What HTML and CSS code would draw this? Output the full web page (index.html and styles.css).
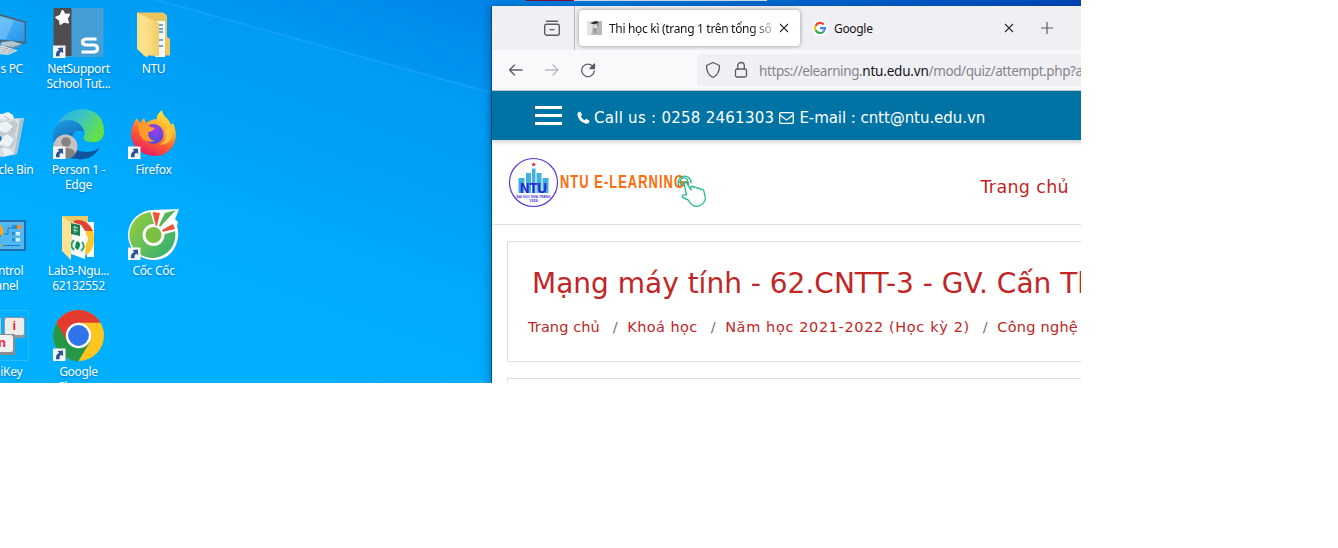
FILE: index.html
```html
<!DOCTYPE html>
<html lang="vi">
<head>
<meta charset="utf-8">
<title>Desktop</title>
<link rel="stylesheet" href="styles.css">
</head>
<body>
<svg class="defs" width="0" height="0" aria-hidden="true">
  <defs>
    <linearGradient id="folder" x1="0" x2="1"><stop offset="0" stop-color="#fbe08a"/><stop offset="1" stop-color="#f1cd62"/></linearGradient>
    <linearGradient id="edgeTop" x1="0" x2="1" y2=".4"><stop offset="0" stop-color="#2fa8e0"/><stop offset=".5" stop-color="#35c1d0"/><stop offset="1" stop-color="#62e04e"/></linearGradient>
    <linearGradient id="edgeLeft" x1="0" x2=".5" y2="1"><stop offset="0" stop-color="#1b9de2"/><stop offset="1" stop-color="#1254a0"/></linearGradient>
    <linearGradient id="fox" x1=".8" x2=".3" y2="1"><stop offset="0" stop-color="#fff04a"/><stop offset=".35" stop-color="#ffb02c"/><stop offset=".65" stop-color="#ff5a35"/><stop offset="1" stop-color="#e6176a"/></linearGradient>
    <radialGradient id="globe" cx=".6" cy=".3"><stop offset="0" stop-color="#a53bec"/><stop offset="1" stop-color="#5a4be0"/></radialGradient>
    <linearGradient id="coc" x1="0" x2="1" y2=".8"><stop offset="0" stop-color="#9bce3b"/><stop offset="1" stop-color="#35b070"/></linearGradient>
    <linearGradient id="screen" x1="0" x2="1" y2="1"><stop offset="0" stop-color="#7accff"/><stop offset="1" stop-color="#2396ec"/></linearGradient>
    <g id="shortcut">
      <rect x="0" y="38.500" width="12.500" height="12.500" fill="#f4f6f8"/>
      <path d="M3 49.300q-.6-5 3.200-6.200L4.500 41l5.400-.4.300 5.600-1.700-1.500q-2.800 1-1.700 4.600z" fill="#2c5598"/>
    </g>
  </defs>
</svg>

<main class="desktop">
  <svg class="wallpaper" viewBox="0 0 1081 383" aria-hidden="true">
    <path d="M155 0L492 93V0z" class="ray-shade"/>
    <path d="M145 -3L200 12L492 93" class="ray"/>
  </svg>

  <section class="icons">
    <div class="item">
      <svg viewBox="0 0 51 52"><path d="M-10 -2l58 16.500v22.500l-58-4z" fill="#4a6478"/><path d="M-10 0l56.500 15.800V34.500l-56.500-4z" fill="url(#screen)"/><path d="M22 9l14 4-8 19.500-6-.5z" fill="#a6ddff" opacity=".35"/><path d="M24 35l10-1 10 3-9 3-13-1z" fill="#b4c6d0"/><path d="M22 38l13 2 7-2v1.500L35 42l-13-2z" fill="#6d8da1"/><path d="M6 40l18-1.500 16 5-10 4.500-24-3z" fill="#dce4e8"/><path d="M20 42l16 3.500M22 40l15 4M18 44l14 3M24 46l6-5M29 47l6-5" stroke="#93a6b1" stroke-width=".7"/></svg>
      <span>This PC</span>
    </div>
    <div class="item">
      <svg viewBox="0 0 51 52"><rect x=".5" y="1" width="50" height="49" fill="#459fd5"/><rect x=".5" y="1" width="18" height="48" fill="#4f4d50"/><path d="M9.500 4l2.200 3.800 4.300-.3-2.300 4 1.300 4-4-1L7.500 17l-.7-4.200L3.300 10.500l4.200-1.700z" fill="#fff" stroke="#fff" stroke-width="2" stroke-linejoin="round"/><path d="M43.500 32H34q-4.500 0-4.500 3t4.500 3h6.500q4 0 4 3.500t-4 3.500H28.500" fill="none" stroke="#fff" stroke-width="3.200"/><use href="#shortcut"/></svg>
      <span>NetSupport<br>School Tut...</span>
    </div>
    <div class="item">
      <svg viewBox="0 0 51 52"><path d="M9 5.500h26l4 3v22l3 5v13H15z" fill="#e9c55e"/><path d="M29 14h8v36H27z" fill="#f5f7fa"/><path d="M31 18h4m-5 4h5m-5 3h5m-5 8h5m-5 6h5" stroke="#3f8fc6" stroke-width="1.500"/><path d="M9 5.500l11 5v39l-2 .5-9-8z" fill="#fbe08a"/><path d="M18 10l13 6v33l-12-1z" fill="url(#folder)"/><path d="M38 29l4 3v16h-4z" fill="#efc65a"/></svg>
      <span>NTU</span>
    </div>

    <div class="item">
      <svg viewBox="0 0 51 52"><path d="M8 11l7-6 9 1 6-2 5 3 1 4 6 2-2 5H10z" fill="#eef2f4"/><path d="M5 12l41-2-7 36-14 3-14-2z" fill="#d9e0e4"/><path d="M42 11l4-1-7 36-3 1z" fill="#a9c0cd"/><path d="M22 12l6 3 8-3 4 4-3 9 1 8-4 8-8-2-8 4z" fill="#c3ccd2"/><path d="M22 15l7-2 6 6-7 6-6-2zM22 31l7-5 7 5-5 8-9-2zM24 40l7 1 4 4-8 3z" fill="#eff2f4"/><path d="M26 8l5 3-4 3M33 20l4 4" fill="none" stroke="#a5b1b9" stroke-width=".8"/><path d="M14 27q9-2 10 4l-3 4-7-1z" fill="#1472ce"/></svg>
      <span>Recycle Bin</span>
    </div>
    <div class="item">
      <svg viewBox="0 0 51 52"><path d="M4 20C6-2 51-9 51 23q0 12-13 11-10-1-7-6c5-13-19-16-31-2z" fill="url(#edgeTop)"/><path d="M0 27C1 7 28 8 31 24q-8-4-11 3-6 17 14 17 9 0 13-5-8 14-22 12Q0 50 0 27z" fill="url(#edgeLeft)"/><path d="M18 24q-5 20 16 20 9 0 13-5-8 14-22 12-16-13-7-27z" fill="#10559c"/><circle cx="12.500" cy="38.500" r="12" fill="#c4c3c2"/><circle cx="13" cy="34" r="4.800" fill="#858381"/><path d="M6 45q1-5 7-5 8 0 9 5-2 5-9 6z" fill="#858381"/><use href="#shortcut"/></svg>
      <span>Person 1 -<br>Edge</span>
    </div>
    <div class="item">
      <svg viewBox="0 0 51 52"><path d="M9 10l3 5 4-5 2 5q6-4 11-4c-1-4 3-7 5-9 0 6 7 8 9 15l2-2c8 17-2 33-18 33S0 34 4 20q1-5 5-10z" fill="url(#fox)"/><circle cx="25.500" cy="26" r="10" fill="url(#globe)"/><path d="M10 16q8-2 13 3l4 1q-3 4-7 4 0 8 7 9-11 3-15-6z" fill="#ff9a2b"/><path d="M29 13q9 2 9 13 0 8-7 11 15-1 13-15l-5-8q2 5 0 7-4-7-10-8z" fill="#ffc23b"/><use href="#shortcut"/></svg>
      <span>Firefox</span>
    </div>

    <div class="item">
      <svg viewBox="0 0 51 52"><rect x="-5" y="11" width="53" height="31" rx="1.500" fill="#236fae"/><rect x="-5" y="13" width="51" height="27" fill="#50b9f3"/><circle cx="17" cy="22" r="8" fill="#1b7dca"/><path d="M17 14a8 8 0 0 1 6.500 13L17 22z" fill="#fba826"/><path d="M26 25h4v-6h4" fill="none" stroke="#1c77b9"/><path d="M34 16h9v4h-9zM34 23h8v3.500h-8zM34 29h8v3.500h-8z" fill="#2c8dcb"/><path d="M39 16h4v4h-4z" fill="#ff8a20"/><path d="M37.500 23H42v3.500h-4.500zM37.500 29H42v3.500h-4.500z" fill="#d7f1ff"/><path d="M5 36.500h37" stroke="#147cc3"/><path d="M5 36.500h20" stroke="#f19b28"/></svg>
      <span>Control<br>Panel</span>
    </div>
    <div class="item">
      <svg viewBox="0 0 51 52"><path d="M9 7h26v30H9z" fill="#e9c961"/><path d="M34 13h7v35h-7z" fill="#f8f8f7"/><path d="M24 13q17-1 17 17 0 15-13 18z" fill="#fcc72e"/><path d="M20 12q13-4 20 10H27z" fill="#df4436"/><circle cx="29" cy="30" r="6" fill="#fff"/><circle cx="28" cy="30" r="4.500" fill="#3679dd"/><path d="M19 13l9 3 5 7-1 27-14-5z" fill="#f7fafa"/><path d="M18 14l9 2v11l-9-2z" fill="#198151"/><path d="M20 18l5 1m-5 2l5 1m-3-5v7" stroke="#c9ead7" stroke-width=".8"/><path d="M21 31q-5 5 0 10m8-8q4 5-1 9" fill="none" stroke="#23a05f" stroke-width="1.800"/><path d="M23 33q4-2 4 4l-2 4-3-2z" fill="#0c8b4d"/><path d="M9 7l9 7v37l-9-9z" fill="#fbe294"/></svg>
      <span>Lab3-Ngu...<br>62132552</span>
    </div>
    <div class="item">
      <svg viewBox="0 0 51 52"><path d="M25 1l26-1q-2 6-4 10l3 3-1 5c3 5 2 33-24 33A25 25 0 0 1 25 1z" fill="#fff"/><path d="M24 3a23 23 0 1 0 23 19L31 27 27 16z" fill="url(#coc)"/><circle cx="25.500" cy="26" r="11" fill="#fff"/><circle cx="25.500" cy="26" r="8" fill="#7ac143"/><path d="M25 3l7 1-3 13-3-1z" fill="#ef5438"/><path d="M37 4l11-3-16 17-1-2z" fill="#52b55b"/><path d="M45 15l2 5-12 3-1-2z" fill="#ef5438"/><path d="M23 2l4 14M33 4l-3 14M48 2L34 20M48 21l-14 3" stroke="#fff" stroke-width="1.400"/><use href="#shortcut"/></svg>
      <span>Cốc Cốc</span>
    </div>

    <div class="item">
      <svg viewBox="0 0 51 52" class="keys"><path d="M-5 .5h55.500v50H-5" fill="none" stroke="#36c0fb" stroke-width=".7"/><rect x="2" y="8" width="21" height="19" rx="1" fill="#bfc3c5"/><rect x="26" y="7" width="21" height="21" rx="1" fill="#929698"/><rect x="27" y="8" width="19" height="17" rx="2" fill="#ececec"/><rect x="15" y="24" width="22" height="21" rx="1" fill="#898d8f"/><rect x="15" y="25" width="20" height="17" rx="2" fill="#f1f1f1"/><text x="34.500" y="19.500">i</text><text x="20" y="36.500">n</text></svg>
      <span>UniKey</span>
    </div>
    <div class="item">
      <svg viewBox="0 0 51 52"><circle cx="25.500" cy="25.500" r="25.500" fill="#fdc51d"/><path d="M3.400 12.800A25.500 25.500 0 0 1 47.600 12.800H25.500L14 32z" fill="#e33b2e"/><path d="M3.400 12.800A25.500 25.500 0 0 0 25.500 51L37 32 25 36 14.500 32z" fill="#259746"/><circle cx="25.500" cy="25.500" r="12.700" fill="#fff"/><circle cx="25.500" cy="25.500" r="10.400" fill="#2f74e8"/><use href="#shortcut"/></svg>
      <span>Google<br>Chrome</span>
    </div>
  </section>

  <div class="behind"><i class="behind-red"></i><i class="behind-gray"></i></div>

  <section class="window">
    <header class="tabs">
      <div class="recent"><svg width="18" height="18" viewBox="0 0 18 18" fill="none" stroke="#5b5b66" stroke-width="1.400" stroke-linecap="round"><path d="M3.500 2.200h11M7 10.600h4"/><rect x="1.700" y="5.200" width="14.600" height="11" rx="2"/></svg></div>
      <div class="tab active">
        <svg width="16" height="16" viewBox="0 0 16 16"><path d="M0 1h15v14H0z" fill="#b8b8b8"/><path d="M0 1h7L4 15H0z" fill="#e4e4e4"/><path d="M3 3l6-2 3 1.500L7 4.500z" fill="#2e2e2e"/><path d="M5 4.500h5V8L8 10 5 7z" fill="#d9d9d9"/><path d="M11 3v3M6.500 8l1.500 2 1.500-2M8 10v3" fill="none" stroke="#666" stroke-width=".8"/></svg>
        <span class="title fade">Thi học kì (trang 1 trên tổng số 3)</span>
        <svg class="x" width="10" height="10" viewBox="0 0 10 10"><path d="M1 1l8 8M9 1l-8 8"/></svg>
      </div>
      <div class="tab">
        <svg width="16" height="16" viewBox="0 0 16 16"><circle cx="8" cy="8" r="8" fill="#fff"/><g fill="none" stroke-width="2.200"><path d="M11.800 4.500A5 5 0 0 0 3.600 5.700" stroke="#ea4335"/><path d="M3.600 5.700a5 5 0 0 0 0 4.600" stroke="#fbbc05"/><path d="M3.600 10.300a5 5 0 0 0 7.800 1.400" stroke="#34a853"/><path d="M11.400 11.700A5 5 0 0 0 13 8.100H8" stroke="#4285f4"/></g></svg>
        <span class="title">Google</span>
        <svg class="x" width="10" height="10" viewBox="0 0 10 10"><path d="M1 1l8 8M9 1l-8 8"/></svg>
      </div>
      <svg class="plus" width="12" height="12" viewBox="0 0 12 12"><path d="M6 0v12M0 6h12"/></svg>
    </header>

    <nav class="toolbar">
      <svg width="16" height="16" viewBox="0 0 16 16" class="tool"><path d="M14 8H1.500M6.500 3L1.500 8l5 5"/></svg>
      <svg width="16" height="16" viewBox="0 0 16 16" class="tool off"><path d="M1.500 8H14M9 3l5 5-5 5"/></svg>
      <svg width="16" height="16" viewBox="0 0 16 16" class="tool"><path d="M13 4.500A6.300 6.300 0 1 0 14.300 9"/><path d="M14.500 2v4.500H10z" fill="#5b5b66"/></svg>
      <div class="address">
        <svg width="16" height="18" viewBox="0 0 16 18" class="tool"><path d="M8 1.500l6.500 3q0 9-6.500 12Q1.500 13.500 1.500 4.500z"/></svg>
        <svg width="14" height="18" viewBox="0 0 14 18" class="tool"><rect x="1.500" y="8" width="11" height="8" rx="1.500"/><path d="M3.700 8V4.800a3.300 3.300 0 0 1 6.600 0V8"/></svg>
        <span class="url">https://elearning.<b>ntu.edu.vn</b>/mod/quiz/attempt.php?attempt</span>
      </div>
    </nav>

    <div class="contact">
      <div class="burger"><i></i><i></i><i></i></div>
      <svg width="13" height="13" viewBox="0 0 13 13"><path d="M1 1.500L3.300.4 5.200 4 3.700 5.300Q5 8 7.700 9.300L9 7.800l3.600 1.900-1 2.300Q10.500 13 8.500 12.500 2 10.500.5 4.500.2 2.500 1 1.500z" fill="#fff"/></svg>
      <span class="call">Call us : 0258 2461303</span>
      <svg width="15" height="12" viewBox="0 0 15 12" fill="none" stroke="#fff" stroke-width="1.300"><rect x=".7" y=".7" width="13.600" height="10.600" rx="1"/><path d="M1 3l6.500 5L14 3"/></svg>
      <span class="mail">E-mail : cntt@ntu.edu.vn</span>
    </div>

    <div class="brand">
      <svg class="logo" width="200" height="52" viewBox="0 0 200 52">
        <circle cx="25.500" cy="25.500" r="24" fill="#fff" stroke="#5735e0" stroke-width="1.200"/>
        <path d="M10.500 21h6v15h-6zM18 16h5v20h-5zM24 11.500h3.500V36H24zM28.500 16h5v20h-5zM34.500 21h6v15h-6z" fill="#3fb0df"/>
        <path d="M25.700 5.200l.7 1.600h1.700l-1.300 1.100.5 1.700-1.600-1-1.500 1 .5-1.700-1.400-1.100H25z" fill="#e02020"/>
        <text x="25.500" y="35.500" class="ntu" textLength="27" lengthAdjust="spacingAndGlyphs">NTU</text>
        <text x="25.500" y="40.800" class="school" textLength="34" lengthAdjust="spacingAndGlyphs">ĐẠI HỌC NHA TRANG</text>
        <text x="25.500" y="44.800" class="school">1959</text>
        <text x="52" y="30.700" class="word" textLength="125" lengthAdjust="spacingAndGlyphs">NTU E-LEARNING</text>
        <circle cx="178" cy="27" r="3.200" fill="#7d7a3a" opacity=".8"/>
        <g fill="none" stroke="#16b888" stroke-width="1.200" stroke-linejoin="round" stroke-linecap="round">
          <path d="M171 29a6.500 6.500 0 1 1 12-3M173.500 28a4 4 0 1 1 6.500-3"/>
          <path d="M176 26.500q1.800-2 3 0l4 6.500-.2-3q1.800-2.200 3.400.8.700-2 3.400.8 1.300-1.700 3 1 3-1.400 3.400 2l1.300 5.500q.4 6.500-7 9-6.500 1.500-10-6l-6-3q-.8-3 4.200-2.100z" fill="#fff"/>
        </g>
      </svg>
      <a class="home">Trang chủ</a>
    </div>

    <article class="page">
      <div class="card">
        <h1>Mạng máy tính - 62.CNTT-3 - GV. Cấn Thị Phượng</h1>
        <div class="crumbs"><a>Trang chủ</a><i>/</i><a class="faculty">Khoá học</a><i>/</i><a class="term">Năm học 2021-2022 (Học kỳ 2)</a><i>/</i><a class="dept">Công nghệ</a></div>
      </div>
      <div class="card"></div>
    </article>
  </section>
</main>
</body>
</html>
```

FILE: styles.css
```css
* { box-sizing: border-box; }
body { margin: 0; background: #fff; overflow: hidden; }
svg { display: block; flex: none; }
.defs { position: absolute; }

.desktop {
  position: relative;
  width: 1081px;
  height: 383px;
  overflow: hidden;
  background: linear-gradient(to bottom left, #0048bc 0%, #0062d0 10%, #0087ea 27%, #009bf4 41%, #00a1f7 53%, #00aafc 67%, #00afff 85%, #00b0ff 100%);
  font-family: "Noto Sans", "Open Sans", sans-serif;
}
.wallpaper { position: absolute; inset: 0; }
.ray { stroke: #1eaaff; stroke-width: 2; opacity: .55; fill: none; }
.ray-shade { fill: #0078dd; opacity: .1; }

.icons {
  position: relative;
  display: grid;
  grid-template-columns: repeat(3, 75px);
  grid-auto-rows: 101px;
  width: 225px;
  margin-left: -34px;
  padding-top: 7px;
}
.item { display: flex; flex-direction: column; align-items: center; gap: 2px; }
.item svg { width: 51px; height: 52px; overflow: visible; }
.item span {
  color: #fff;
  font-size: 12px;
  line-height: 15px;
  letter-spacing: -.3px;
  text-align: center;
  white-space: nowrap;
  text-shadow: 0 1px 2px rgba(0, 50, 110, .45);
}
.keys text { font: bold 13px "Liberation Sans", sans-serif; fill: #f3262c; }

.behind { position: absolute; left: 526px; top: 0; display: flex; height: 1px; }
.behind-red { width: 48px; background: #7c1235; }
.behind-gray { width: 193px; background: #d8e2e6; }

.window {
  position: absolute;
  left: 491px;
  top: 6px;
  width: 700px;
  height: 400px;
  border-left: 1px solid #0b4d78;
  background: #fff;
  box-shadow: 0 0 10px rgba(0, 30, 70, .4);
}

.tabs { display: flex; align-items: center; height: 44px; background: #f0eff4; }
.recent { width: 83px; height: 44px; padding: 13px 0 0 51px; border-right: 1px solid #b9b9be; }
.tab { display: flex; align-items: center; width: 221px; height: 36px; padding: 0 11px 0 8px; }
.tab + .tab { margin-left: 4px; }
.active { margin-left: 4px; background: #fff; border-radius: 4px; box-shadow: 0 0 4px rgba(0, 0, 0, .4); }
.title { flex: 1; margin: 2px 0 0 6px; overflow: hidden; color: #15141a; font-size: 12px; line-height: 18px; letter-spacing: -.32px; white-space: nowrap; }
.fade { -webkit-mask-image: linear-gradient(to right, #000 86%, transparent 104%); mask-image: linear-gradient(to right, #000 86%, transparent 104%); margin-right: 5px; }
.x path { stroke: #2b2a33; stroke-width: 1.1; }
.plus { margin-left: 16px; }
.plus path { stroke: #5b5b66; stroke-width: 1.2; }

.toolbar { display: flex; align-items: center; gap: 20px; height: 41px; padding-left: 16px; background: #f9f9fb; border-bottom: 1px solid #ccc; }
.tool { fill: none; stroke: #5b5b66; stroke-width: 1.3; stroke-linecap: round; stroke-linejoin: round; }
.off { opacity: .4; }
.address { display: flex; align-items: center; flex: 1; height: 32px; margin-left: 81px; padding-left: 8px; gap: 13px; border-radius: 4px; background: #f0f0f4; overflow: hidden; }
.url { margin: 1px 0 0 -2px; color: #85848c; font-size: 13.5px; letter-spacing: -.4px; white-space: nowrap; }
.url b { color: #15141a; font-weight: 400; letter-spacing: -.2px; }

.contact { position: relative; display: flex; align-items: center; height: 49px; padding: 4px 0 0 43px; background: #0073a5; color: #fff; font: 15px "DejaVu Sans", sans-serif; box-shadow: 0 2px 5px rgba(0, 0, 0, .2); white-space: nowrap; }
.burger { display: grid; gap: 5px; width: 27px; margin: -5px 15px 0 0; }
.burger i { height: 3px; background: #fff; }
.call { margin: 0 5px 0 4px; letter-spacing: .27px; }
.mail { margin-left: 5px; letter-spacing: -.06px; }

.brand { display: flex; justify-content: space-between; height: 85px; padding: 17px 122px 0 16px; border-bottom: 1px solid #e0e0e0; }
.ntu { font: bold 15px "Liberation Sans", sans-serif; fill: #2e22d0; text-anchor: middle; }
.school { font: bold 4px "Liberation Sans", sans-serif; fill: #4a35d5; text-anchor: middle; }
.word { font: bold 18.5px "Liberation Sans", sans-serif; fill: #ff6c0a; letter-spacing: 1.5px; }
.home { margin-top: 19px; color: #c22525; font: 17.5px/22px "DejaVu Sans", sans-serif; letter-spacing: .33px; }

.page { display: grid; gap: 16px; padding: 16px 0 0 15px; }
.card { height: 121px; padding: 25px 0 0 20px; border: 1px solid #dedede; color: #c22525; font-family: "DejaVu Sans", sans-serif; white-space: nowrap; overflow: hidden; }
.card h1 { margin: 0 0 0 4px; font-size: 28px; line-height: 34px; font-weight: 400; }
.crumbs { display: flex; margin-top: 16px; font-size: 14.5px; line-height: 20px; letter-spacing: .1px; }
.crumbs i { margin: 0 9.5px 0 13px; color: #70757a; font-style: normal; }
.crumbs .faculty { letter-spacing: .4px; }
.crumbs .term { letter-spacing: .62px; }
.crumbs .dept { letter-spacing: .25px; }
```
